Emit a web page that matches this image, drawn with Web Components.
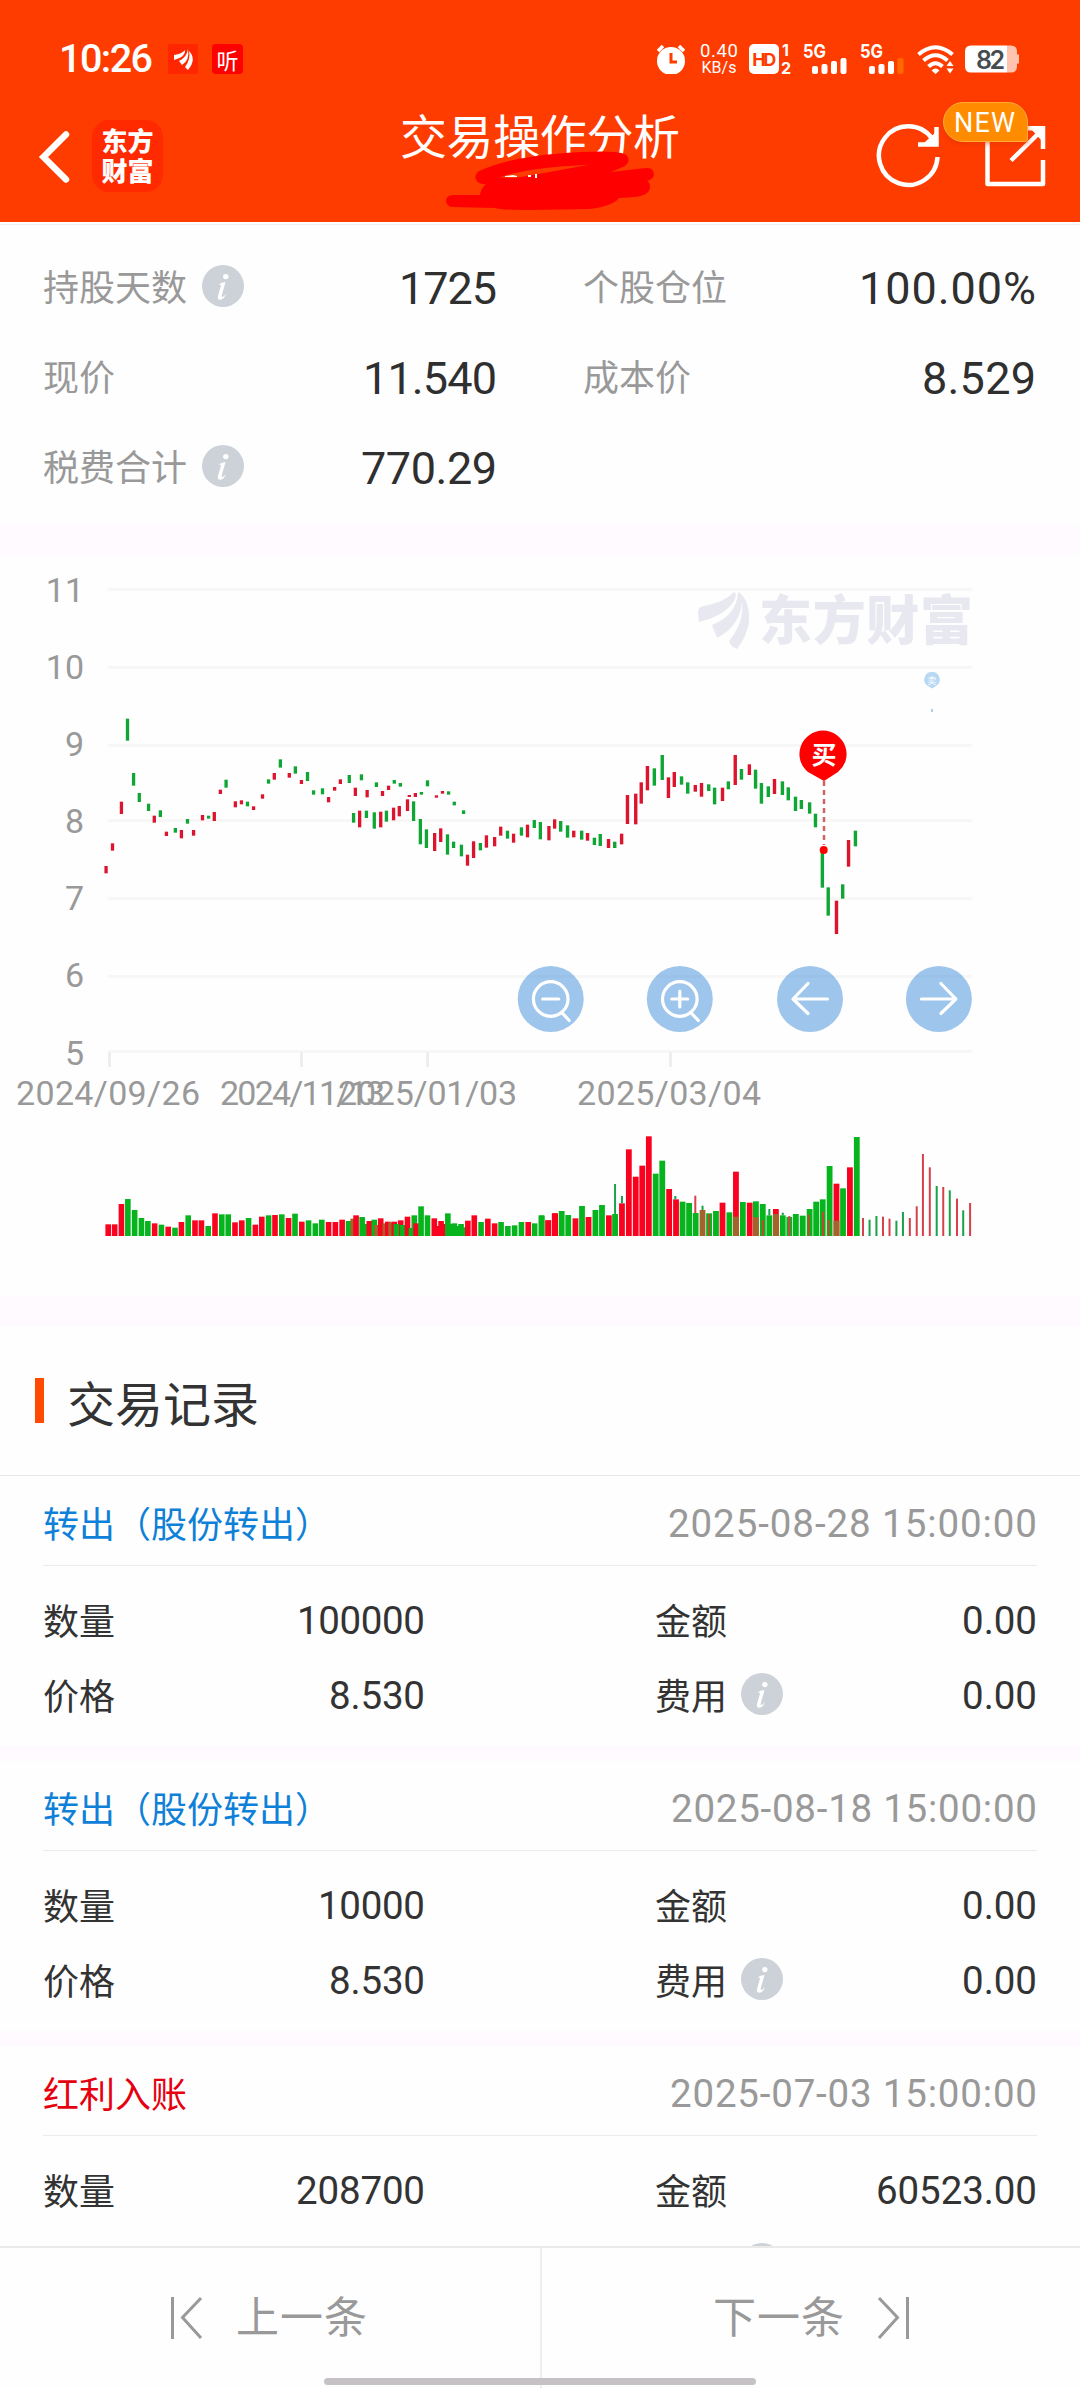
<!DOCTYPE html>
<html lang="zh-CN">
<head>
<meta charset="utf-8">
<title>交易操作分析</title>
<style>
html,body{margin:0;padding:0}
body{width:1080px;height:2388px;overflow:hidden;background:#fefefe;font-family:"Noto Sans CJK SC","Noto Sans",sans-serif;color:#333}
</style>
</head>
<body>
<trade-page></trade-page>
<script>
const define = (name, html, setup) => customElements.define(name, class extends HTMLElement {
  connectedCallback() {
    if (this.shadowRoot) return;
    const root = this.attachShadow({mode: 'open'});
    root.innerHTML = typeof html === 'function' ? html(this) : html;
    if (setup) setup(root, this);
  }
});

/* Text whose tracking is adjusted to fill a set width */
define('fit-text', `<style>:host{display:inline-block;white-space:nowrap;line-height:1.2}span{display:inline-block}</style><span><slot></slot></span>`,
  (root, el) => {
    const w = +el.getAttribute('w'), s = root.querySelector('span');
    if (!w) return;
    const n = el.textContent.length;
    const ls = (w - s.getBoundingClientRect().width) / (n - 1);
    s.style.letterSpacing = ls + 'px';
    s.style.marginRight = -ls + 'px';
  });

define('info-dot', `<style>:host{display:block;width:42px;height:42px}svg{display:block}</style>
<svg width="42" height="42" viewBox="0 0 42 42"><circle cx="21" cy="21" r="21" fill="#ccd2d8"/>
<circle cx="23.8" cy="11.6" r="2.7" fill="#fff"/><path d="M16.5 19.5 Q20 17.3 23.6 17 L19.8 30 Q19.4 32.6 21 31.8 Q22.6 30.8 24 29 Q22 34.6 18.2 34.8 Q15 34.7 16 31 L19 20.6 Q18.8 19.2 16.5 19.5Z" fill="#fff"/></svg>`);

define('status-bar', `<style>
:host{display:flex;align-items:center;height:30px;padding:44px 0 0 59px;color:#fff}
svg{display:block;flex:none}
.time{font-family:Roboto;font-size:39.500px;font-weight:500}
.net{display:flex;flex-direction:column;align-items:center;font-family:Roboto;font-size:18.500px;margin-left:13px;width:40px;height:34px;flex:none}
.net fit-text{line-height:18px;height:17px}
.net fit-text+fit-text{font-size:16px}
.tag{width:31px;height:30px;border-radius:4px;background:#f00;display:flex;align-items:center;justify-content:center;font-size:22px;line-height:30px;margin-left:14px;flex:none}
</style>
<fit-text class="time" w="94">10:26</fit-text>
<svg style="margin-left:15px" width="30" height="30" viewBox="0 0 30 30"><rect width="30" height="30" rx="2" fill="#ff2600"/><path fill="#fff" d="M6 11 Q14 10 17 6 Q18 13 6 16ZM11 17 Q19 13 20 5 Q22 16 14 21ZM17 23 Q23 15 21 7 Q29 15 20 26Z"/></svg>
<span class="tag">听</span>
<svg style="margin-left:413px" width="30" height="30" viewBox="0 0 30 30"><circle cx="15" cy="17" r="14" fill="#fff"/><path d="M2 7l5-5M28 7l-5-5" stroke="#fff" stroke-width="3.5"/><path d="M15 9v9h6" fill="none" stroke="#ff3c00" stroke-width="3"/></svg>
<div class="net"><fit-text w="38">0.40</fit-text><fit-text w="35">KB/s</fit-text></div>
<svg style="margin-left:10px" width="43" height="30" viewBox="0 0 43 30" overflow="visible"><rect width="30" height="30" rx="5" fill="#fff"/><text x="3.2" y="21.5" textLength="24" font-family="Inter" font-weight="700" font-size="18" fill="#ff3c00">HD</text><g font-family="Inter" font-weight="700" font-size="16" fill="#fff"><text x="33" y="12">1</text><text x="32" y="30">2</text></g></svg>
<svg style="margin-left:11px" width="45" height="30" viewBox="0 0 45 30" fill="#fff" overflow="visible"><text x="0" y="14" textLength="23" lengthAdjust="spacingAndGlyphs" font-family="Inter" font-weight="700" font-size="19">5G</text><rect x="9" y="22" width="6" height="8" rx="2"/><rect x="18.5" y="20" width="6" height="10" rx="2"/><rect x="28" y="17" width="6" height="13" rx="2"/><rect x="37.500" y="14" width="6" height="16" rx="2"/></svg>
<svg style="margin-left:12px" width="45" height="30" viewBox="0 0 45 30" fill="#fff" overflow="visible"><text x="0" y="14" textLength="23" lengthAdjust="spacingAndGlyphs" font-family="Inter" font-weight="700" font-size="19">5G</text><rect x="9" y="22" width="6" height="8" rx="2"/><rect x="18.5" y="20" width="6" height="10" rx="2"/><rect x="28" y="17" width="6" height="13" rx="2"/><rect x="37.500" y="14" width="6" height="16" rx="2" fill="#ff6a00"/></svg>
<svg style="margin-left:12px" width="38" height="30" viewBox="0 0 38 30"><g fill="none" stroke="#fff" stroke-width="4"><path d="M1.500 10.500Q18.500-4 35.500 10.500M6.500 16.500Q18.500 6 30.500 16.500M11.500 22.500Q18.500 16 25.500 22.500"/></g><path d="M14.500 26.500Q18.500 22.500 22.500 26.500L18.500 30ZM29.500 22h7l-3.500-5ZM29.500 24.500h7l-3.500 5Z" fill="#fff"/></svg>
<svg style="margin-left:10px" width="56" height="28" viewBox="0 0 56 28" overflow="visible"><path d="M42 .5h4q6 0 6 6v3h2v9h-2v3q0 6-6 6h-4z" fill="#ffc3b0"/><path d="M6 .5h36v27H6q-6 0-6-6v-15q0-6 6-6z" fill="#fff"/><text x="11" y="23.500" textLength="29" font-family="Inter" font-weight="600" font-size="25" fill="#444c50">82</text></svg>`);

define('app-header', `<style>
:host{display:block;height:222px;background:#ff3c00;border-bottom:2px solid #fff;box-shadow:0 1px 0 #eee;color:#fff}
nav{display:grid;grid-template-columns:400px 280px 1fr;height:148px}
svg{display:block;flex:none}
.left{display:flex;align-items:flex-start;padding:46px 0 0 38px}
.left svg{margin-top:9px}
.brand{margin-left:21px;width:71px;height:72px;box-sizing:border-box;border-radius:17px;background:#ff2a00;display:flex;flex-direction:column;align-items:center;justify-content:center;font-weight:900;font-size:26px;line-height:30px;padding-bottom:2px}
.mid{position:relative}
.title{font-size:47px;line-height:56px;margin-top:32px;display:block}
.mark{position:absolute;left:40px;top:74px}
.right{position:relative;padding:48px 0 0 194px;display:flex;gap:42px}
.new{position:absolute;left:263px;top:28px;width:85px;height:40px;box-sizing:border-box;border:1px solid #ffab3a;border-radius:20px 20px 3px 20px;background:#ff8c00;box-shadow:0 2px 5px #d9300088;font:27px/40px Roboto;padding-left:10px}
</style>
<status-bar></status-bar>
<nav>
<div class="left"><svg width="33" height="54" viewBox="0 0 33 54"><path d="M28 5.500 5.500 28 28 50.500" fill="none" stroke="#fff" stroke-width="6.500" stroke-linecap="round" stroke-linejoin="miter"/></svg>
<div class="brand"><span>东方</span><span>财富</span></div></div>
<div class="mid"><fit-text class="title" w="280">交易操作分析</fit-text>
<svg class="mark" width="220" height="64" viewBox="440 148 220 64"><path d="M482 177Q510 164 560 160T622 160" fill="none" stroke="#f00" stroke-width="13" stroke-linecap="round"/><path d="M476 177Q478 185 486 184Q481 188 480 195L452 195Q446 196 446 201Q447 207 453 207L495 208Q500 210 530 210L590 209Q613 206 619 198L635 197Q650 195 650 187Q650 182 647 181Q654 179 654 174Q653 167 646 168L611 172L625 166L622 158L598 163Q540 174 514 178L488 177L482 170Z" fill="#f00"/><path d="M505 176l8-1 4 1v1h-12zM528 175h3v2h-3zM535 174h2v4h-2z" fill="#fff"/></svg></div>
<div class="right"><svg width="68" height="66" viewBox="874 122 68 66"><g fill="none" stroke="#fff" stroke-width="4.500"><path d="M937.500 157A29.300 29.300 0 1 1 932 138.500L937 145"/><path d="M936.500 127V144.500H918"/></g><path d="M925 142L936 132v12h-12z" fill="#fff"/></svg>
<svg width="64" height="66" viewBox="984 122 64 66"><g fill="none" stroke="#fff" stroke-width="4.500" stroke-linejoin="round"><path d="M987.500 140V184H1043V160"/><path d="M1011 160.500L1042 130"/><path stroke-linejoin="miter" d="M1026 128.300H1043V149"/></g><path d="M1031 129h11v12z" fill="#fff"/></svg>
<span class="new"><fit-text w="61">NEW</fit-text></span></div>
</nav>`);

define('stat-item', el => `<style>
:host{display:flex;align-items:center;height:90px}
.l{font-size:36px;color:#999;margin-top:-4px}
info-dot{margin:-4px 0 0 15px}
.v{margin-left:auto;font-family:Roboto;font-size:45px;color:#2f2f2f;margin-top:2px}
</style><fit-text class="l">${el.getAttribute('label')}</fit-text>${el.hasAttribute('info') ? '<info-dot></info-dot>' : ''}<fit-text class="v" w="${el.getAttribute('w')}">${el.textContent}</fit-text>`);

define('stat-panel', `<style>:host{display:grid;grid-template-columns:454px 453px;column-gap:86px;padding:19px 0 12px 43px;border-bottom:30px solid #fefaff}</style>
<stat-item label="持股天数" info w="98">1725</stat-item><stat-item label="个股仓位" w="177">100.00%</stat-item>
<stat-item label="现价" w="134">11.540</stat-item><stat-item label="成本价" w="114">8.529</stat-item>
<stat-item label="税费合计" info w="136">770.29</stat-item>`);

/* [centre x, top, bottom, colour] in plot units; each series has its own scale */
const CANDLES_A = '297 948 970 r;315 880 902 r;340 755 792 r;357 506 572 g;374 669 707 g;390 729 756 g;416 761 783 g;432 797 818 r;449 781 801 g;466 845 858 r;491 834 848 g;508 840 865 r;525 807 821 g;542 840 857 r;567 795 811 r;584 797 806 g;600 786 813 r;617 719 732 r;633 689 713 g;659 754 772 r;676 751 763 r;693 755 769 g;710 769 780 r;735 733 746 r;752 688 701 g;768 669 689 r;785 628 653 g;810 669 683 r;827 649 671 g;844 690 702 r;861 666 693 g;878 721 734 g;903 715 733 g;920 741 757 r;937 711 722 r;953 688 702 r;978 675 699 g;995 713 738 r;1012 673 691 g;1028 720 742 r;1054 697 711 g;1071 723 738 r;1088 707 720 r;1104 690 701 g;1121 699 710 g;1146 735 741 r;1163 729 741 r;1180 726 734 g;1197 691 709 g;1222 736 743 r;1239 723 731 r;1256 724 734 g;1272 755 766 g;1298 781 792 g;990 789 818 g;1007 782 832 r;1026 782 804 g;1048 787 836 g;1066 785 832 r;1082 782 815 g;1102 773 811 r;1118 768 799 r;1141 748 783 r;1158 754 813 g;1177 807 883 g;1194 838 894 g;1217 849 903 r;1234 835 876 r;1253 853 914 g;1270 875 894 g;1292 884 919 g;1309 914 947 r;1326 874 924 r;1345 879 901 g;1362 856 893 r;1385 861 889 r;1402 830 857 r;1421 842 866 g;1438 851 878 r;1460 832 857 g;1477 824 862 r;1496 810 834 g;1513 816 868 g;1537 828 871 r;1553 808 836 r';
const CANDLES_B = '60 813 845 g;80 826 863 g;98 842 862 r;121 842 869 g;138 849 872 r;158 863 885 g;175 852 888 g;199 867 894 r;217 875 894 g;237 851 883 r;254 735 822 r;278 731 823 r;294 697 761 r;312 648 721 r;332 655 707 g;355 615 690 g;373 682 744 r;390 666 711 r;411 679 704 g;429 697 731 g;451 705 725 r;469 699 740 r;490 703 723 g;507 713 763 g;530 713 753 r;547 694 718 g;567 615 705 r;585 657 689 g;608 643 675 r;626 659 716 g;643 699 761 g;663 709 741 g;681 687 732 r;704 694 735 g;721 712 751 g;742 740 783 g;759 750 777 g;783 757 791 g;800 791 832 g;820 905 1013 g;837 1012 1097 g;861 1052 1152 r;879 1003 1046 g;896 870 950 r;916 842 889 g';
const VOL_A = '303 1033 r;321 1033 r;340 972 r;358 957 g;377 990 g;396 1014 g;414 1023 g;433 1030 r;452 1034 g;471 1040 r;490 1043 g;508 1026 r;527 1006 g;546 1021 r;564 1021 r;583 1038 g;602 1000 r;621 1003 g;639 1003 g;658 1027 r;677 1021 r;696 1014 g;715 1034 r;733 1010 r;752 1006 g;770 1005 r;789 1003 g;808 1014 r;826 1001 g;845 1025 r;864 1021 g;883 1030 g;901 1019 g;920 1026 r;939 1026 r;958 1019 r;976 1023 g;989 1016 b;997 1006 r;1014 1011 g;1024 1032 g;1034 1023 r;1048 1019 g;1056 1035 b;1066 1015 r;1079 1030 b;1086 1025 r;1095 1027 b;1104 1025 r;1122 1021 r;1110 1032 g;1128 1035 g;1141 1010 r;1152 1044 g;1160 1006 g;1165 1030 r;1179 979 g;1197 1006 g;1216 1015 r;1235 1023 r;1226 1038 r;1244 1032 r;1254 1000 g;1262 1032 g;1272 1030 g;1281 1038 g;1291 1032 g;1299 1042 g;1310 1022 r;1328 1006 r;1347 1026 g;1366 1016 r;1385 1030 r;1403 1026 g;1422 1038 g;1441 1036 g;1460 1026 g;1479 1026 r;1497 1030 g;1516 1006 g;1535 1021 r;1553 1000 r';
const VOL_B = '5 527 g;24 541 r;44 520 r;63 513 g;82 525 g;103 535 r;122 498 g;141 531 r;161 510 g;180 495 g;200 526 r;218 522 g;238 490 r;258 328 r;278 410 r;297 377 r;316 289 r;336 401 g;355 362 g;375 447 r;395 478 r;414 485 g;433 489 g;452 519 g;472 510 b;491 520 g;511 513 g;530 488 r;550 517 g;569 395 r;589 486 g;609 488 r;627 484 g;647 492 g;666 526 g;685 507 r;705 526 g;724 531 g;743 522 g;763 527 g;783 507 g;802 485 g;821 478 g;841 378 g;861 431 r;880 445 g;900 382 r;920 291 g;569 530 b;627 532 b;685 522 b;861 542 b';
const VOL_THIN = '218 432 522 g;238 468 490 g;393 468 478 g;451 467 519 r;472 497 510 g;491 522 588 b;647 540 588 b;666 507 526 g;705 518 526 g;724 528 588 r;780 524 588 b;822 515 588 b;838 540 588 b;938 534 588 r;957 539 588 g;977 528 588 g;996 530 588 r;1015 536 588 r;1035 542 588 g;1054 516 588 g;1074 534 588 r;1094 499 588 r;1112 342 588 r;1132 382 588 r;1152 438 588 g;1171 441 588 r;1190 451 588 g;1211 476 588 r;1229 511 588 g;1249 489 588 r';
const bars = (src, ox, oy, sx, w, pal, base) => src.split(';').map(t => {
  const p = t.split(' '), c = p.pop(), y1 = +p[1], y2 = p.length > 2 ? +p[2] : base;
  return `<rect x="${(ox + p[0] / sx - w / 2).toFixed(2)}" y="${(oy + y1 / 3).toFixed(2)}" width="${w}" height="${((y2 - y1) / 3).toFixed(2)}" fill="${pal[c]}"/>`;
}).join('');
const CP = {r: '#dc142e', g: '#10a636'}, VP = {r: '#f9021f', g: '#06b41e', b: '#a3642c'}, TP = {r: '#d8404c', g: '#1ba14c', b: '#bf4a30'};

define('kline-chart', () => {
  const ys = [589.5, 667.5, 745.5, 820.5, 898.5, 976.5, 1051.5];
  const ly = [590, 667, 744, 821, 898, 975, 1053];
  const btn = (x, icon) => `<g transform="translate(${x} 999)"><circle r="33" fill="#4e96da" fill-opacity=".55"/><g fill="none" stroke="#fff" stroke-width="3.200" stroke-linecap="round" stroke-linejoin="round">${icon}</g></g>`;
  const lens = '<circle r="17.300"/><path d="M11 13.500L18.500 21.500"/>';
  return `<style>:host{display:block;border-bottom:30px solid #fefaff}svg{display:block;font-family:"Noto Sans CJK SC"}</style>
<svg width="1080" height="741" viewBox="0 555 1080 741">
<g fill="#f7f7f7">${ys.map(y => `<rect x="108" y="${y - 1.5}" width="864" height="3"/>`).join('')}</g>
<g fill="#eee">${[109.5, 301.5, 427.5, 670.5].map(x => `<rect x="${x - 1.5}" y="1052" width="3" height="15"/>`).join('')}</g>
<g fill="#999" font-family="Roboto" font-size="34">${ly.map((y, i) => `<text x="84" y="${y + 12.3}" text-anchor="end">${11 - i}</text>`).join('')}
${[[16, 184, '2024/09/26'], [220, 165, '2024/11/13'], [338, 179, '2025/01/03'], [577, 184, '2025/03/04']].map(a => `<text x="${a[0]}" y="1105" textLength="${a[1]}">${a[2]}</text>`).join('')}</g>
<g fill="#e8e8f0"><path d="M698 612Q698 607 704 606Q725 602 734 592Q737 593 735 599Q727 615 699 622ZM712 625Q737 615 738 592Q742 593 742 602Q740 626 717 638ZM729 641Q748 618 740 593Q750 602 749 622Q747 636 737 649Q730 646 729 641Z"/>
<text x="759" y="640" font-size="53" font-weight="900" textLength="214">东方财富</text></g>
${bars(CANDLES_A, 0, 550, 2.8, 3.3, CP)}${bars(CANDLES_B, 540, 550, 2.904, 3.4, CP)}
${bars(VOL_A, 0, 880, 2.8, 5.6, VP, 1068)}${bars(VOL_B, 540, 1040, 2.904, 5.8, VP, 588)}${bars(VOL_THIN, 540, 1040, 2.904, 2, TP)}
<path d="M824 781V845" stroke="#cf6466" stroke-width="2.500" stroke-dasharray="5 4"/><circle cx="823.700" cy="850" r="4" fill="#f00"/>
<path d="M823 730.500A24 23.500 0 0 1 838 772L824 781 808 772A24 23.500 0 0 1 823 730.500Z" fill="#f00"/>
<text x="811.500" y="764" font-size="25" font-weight="700" fill="#fff">买</text>
<path d="M932 672A7.500 7.500 0 0 1 936.500 685.700L932 688.500 927.500 685.700A7.500 7.500 0 0 1 932 672Z" fill="#b9d9f3"/><text x="927.500" y="683.500" font-size="9" fill="#fff">卖</text><rect x="931" y="709" width="2" height="3" fill="#b5cfdf"/>
${btn(550.7, lens + '<path d="M-8 0H8"/>')}${btn(679.8, lens + '<path d="M-8 0H8M0-8V8"/>')}${btn(810, '<path d="M17.500 0H-17M-2-15.500L-17 0-2 14.500"/>')}${btn(938.900, '<path d="M-17.500 0H17M2-15.500L17 0 2 14.500"/>')}
</svg>`;
});

define('record-card', el => {
  const a = n => el.getAttribute(n);
  return `<style>
:host{display:block;height:270px;padding:0 43px;border-bottom:15px solid #fefaff}
header{display:flex;justify-content:space-between;align-items:center;height:89px;border-bottom:1px solid #ebebeb;font-size:36px;color:#0f80d8}
header fit-text{margin-top:5px}
header .d{color:#999;font-family:Roboto;font-size:38.500px;margin-top:7px}
.row{display:grid;grid-template-columns:191px 191px 230px 73px 42px 1fr;height:75px;align-items:center;font-size:36px;white-space:nowrap}
.row:first-of-type{padding-top:18px}
.v{justify-self:end;font-family:Roboto;font-size:38.500px}
.row span{margin-top:-6px}
.row .b{grid-column:4}
.row .e{grid-column:6}
info-dot{margin:-5px 0 0 13px}
</style>
<header><fit-text style="color:${a('color') || '#0f80d8'}">${a('kind')}</fit-text><fit-text class="d" w="${a('dw')}">${a('date')}</fit-text></header>
<div class="row"><span>数量</span><fit-text class="v" w="${a('qw')}">${a('qty')}</fit-text><span class="b">金额</span><fit-text class="v e" w="${a('aw') || 75}">${a('amount')}</fit-text></div>
<div class="row"><span>价格</span><fit-text class="v" w="96">${a('price')}</fit-text><span class="b">费用</span><info-dot></info-dot><fit-text class="v e" w="75">${a('fee')}</fit-text></div>`;
});

define('trade-records', `<style>
:host{display:block;height:920px;overflow:hidden}
h2{margin:0;display:flex;align-items:center;height:149px;padding:0 0 0 35px;border-bottom:1px solid #e8e8e8;font-weight:400;font-size:48px}
h2 i{width:9px;height:45px;background:#ff4a00;margin:0 23px 0 0}
h2 fit-text{margin-top:2px}
</style>
<h2><i></i><fit-text w="192">交易记录</fit-text></h2>
<record-card kind="转出（股份转出）" date="2025-08-28 15:00:00" dw="369" qty="100000" qw="128" amount="0.00" price="8.530" fee="0.00"></record-card>
<record-card kind="转出（股份转出）" date="2025-08-18 15:00:00" dw="366" qty="10000" qw="107" amount="0.00" price="8.530" fee="0.00"></record-card>
<record-card kind="红利入账" color="#e6000f" date="2025-07-03 15:00:00" dw="367" qty="208700" qw="129" amount="60523.00" aw="161" price="0.290" fee="0.00"></record-card>`);

define('pager-bar', `<style>
:host{display:grid;grid-template-columns:1fr 1fr;height:140px;border-top:2px solid #eaeaea;position:relative;background:#fefefe;color:#999;font-size:43px}
div{display:flex;align-items:flex-start;padding:42px 0 0 169px}
div+div{padding-left:171px;border-left:2px solid #eee}
svg{display:block;margin-top:6px}
fit-text{margin:-1px 35px 0 33px}
div+div fit-text{margin:-1px 33px 0 0}
.pill{position:absolute;left:324px;top:130px;width:432px;height:7px;border-radius:4px;background:#c5c1c4}
</style>
<div><svg width="34" height="44" viewBox="0 0 34 44"><path d="M3.500 1V43M32 2L13.500 21.500 32 42" fill="none" stroke="#999" stroke-width="3"/></svg><fit-text w="131">上一条</fit-text></div>
<div><fit-text w="131">下一条</fit-text><svg width="34" height="44" viewBox="0 0 34 44"><path d="M30.500 1V43M2 2L20.500 21.500 2 42" fill="none" stroke="#999" stroke-width="3"/></svg></div>
<span class="pill"></span>`);

define('trade-page', `<style>:host{display:block;width:1080px;height:2388px;overflow:hidden;background:#fefefe}</style>
<app-header></app-header><stat-panel></stat-panel><kline-chart></kline-chart><trade-records></trade-records><pager-bar></pager-bar>`);
</script>
</body>
</html>
